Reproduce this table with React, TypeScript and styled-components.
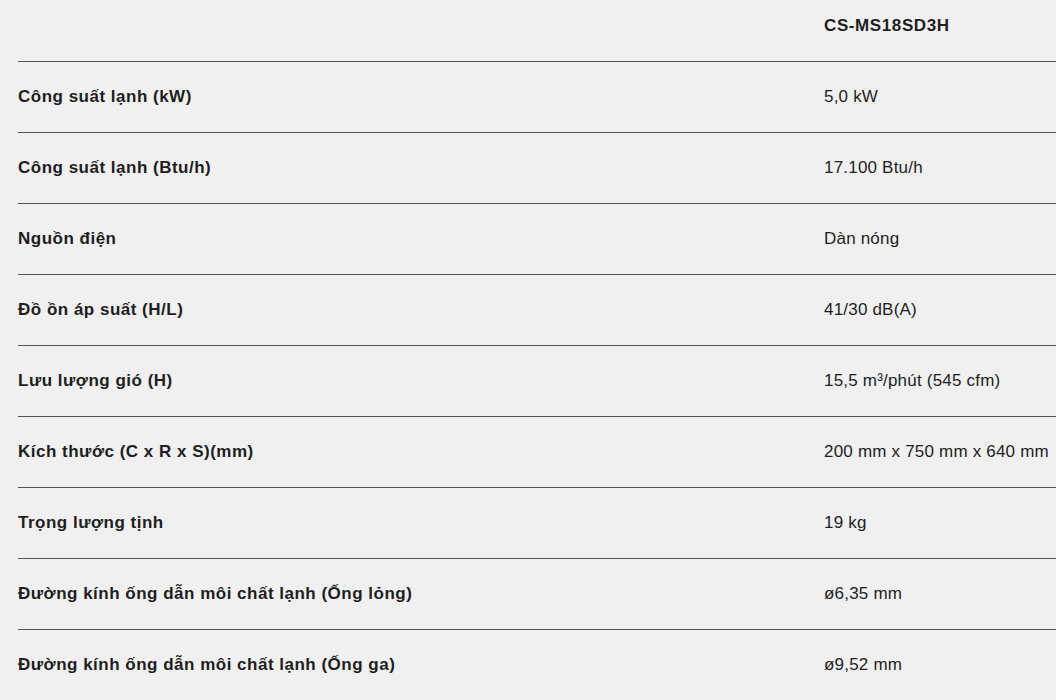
import React from 'react';
import styled, { createGlobalStyle } from 'styled-components';

const GlobalStyle = createGlobalStyle`
	html, body {
		margin: 0;
		padding: 0;
		background: #f0f0f0;
		overflow: hidden;
	}
	body {
		font-family: 'Liberation Sans', Arial, sans-serif;
		color: #1e1e1e;
	}
`;

const Table = styled.div`
	width: calc(100% - 18px);
	margin-left: 18px;
	display: flex;
	flex-direction: column;
`;

const Row = styled.div<{ $head?: boolean }>`
	display: grid;
	grid-template-columns: 806px 1fr;
	border-bottom: 1px solid #555;
	padding: ${(p) => (p.$head ? '17px 0 26px' : '26px 0 26px')};
	font-size: 17px;
	line-height: 18px;
`;

const Label = styled.div`
	font-weight: bold;
	letter-spacing: 0.5px;
	white-space: nowrap;
`;

const Value = styled.div<{ $bold?: boolean }>`
	font-weight: ${(p) => (p.$bold ? 'bold' : 'normal')};
	letter-spacing: ${(p) => (p.$bold ? '0.6px' : '0.2px')};
	white-space: nowrap;
`;

const specs: [string, string][] = [
	['Công suất lạnh (kW)', '5,0 kW'],
	['Công suất lạnh (Btu/h)', '17.100 Btu/h'],
	['Nguồn điện', 'Dàn nóng'],
	['Đồ ồn áp suất (H/L)', '41/30 dB(A)'],
	['Lưu lượng gió (H)', '15,5 m³/phút (545 cfm)'],
	['Kích thước (C x R x S)(mm)', '200 mm x 750 mm x 640 mm'],
	['Trọng lượng tịnh', '19 kg'],
	['Đường kính ống dẫn môi chất lạnh (Ống lỏng)', 'ø6,35 mm'],
	['Đường kính ống dẫn môi chất lạnh (Ống ga)', 'ø9,52 mm'],
];

const App: React.FC = () => {
	return (
		<>
			<GlobalStyle />
			<Table>
				<Row $head>
					<Label />
					<Value $bold>CS-MS18SD3H</Value>
				</Row>
				{specs.map(([label, value]) => (
					<Row key={label}>
						<Label>{label}</Label>
						<Value>{value}</Value>
					</Row>
				))}
			</Table>
		</>
	);
};

export default App;
